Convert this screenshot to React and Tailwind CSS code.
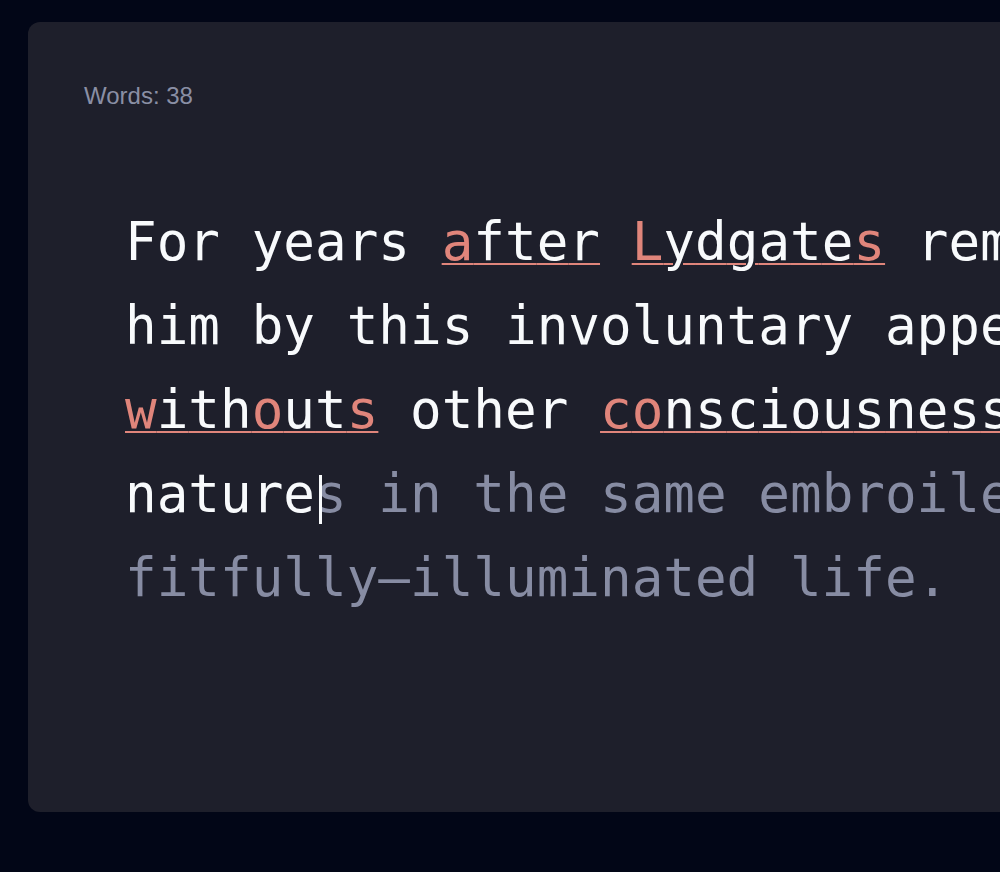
import React from "react";

function Err({ word, bad }) {
  return (
    <span className="underline decoration-[#e0857b] decoration-2 underline-offset-[3px]">
      {word.split("").map((c, i) =>
        bad.includes(i) ? (
          <span key={i} className="text-[#e0857b]">{c}</span>
        ) : (
          <span key={i}>{c}</span>
        )
      )}
    </span>
  );
}

export default function App() {
  return (
    <div className="w-screen h-screen overflow-hidden bg-[#020617] pt-[22px] pl-[28px]">
      <div className="w-[2200px] h-[790px] rounded-xl bg-[#1e1f2b] pt-[58px] pl-[56px]">
        <div className="text-[24px] leading-[32px] text-[#8a8fa5] font-['Liberation_Sans',Arial,sans-serif]">
          Words: 38
        </div>
        <div className="mt-[88px] ml-[41px] w-[2030px] font-['DejaVu_Sans_Mono',monospace] text-[52.6px] leading-[84px] text-[#f8fafc]">
          For years <Err word="after" bad={[0]} /> <Err word="Lydgates" bad={[0, 7]} /> remembered the impression produced in him by this involuntary appeal—this cry from soul to soul, <Err word="withouts" bad={[0, 4, 7]} /> other <Err word="consciousness" bad={[0, 1]} /> than their moving with kindred nature
          <span className="relative inline-block w-0 h-[1em] align-baseline">
            <span className="absolute left-[4px] top-[16px] w-[3px] h-[49px] bg-[#f8fafc]" />
          </span>
          <span className="text-[#878ca3]">s in the same embroiled medium, the same troublous fitfully–illuminated life.</span>
        </div>
      </div>
    </div>
  );
}
